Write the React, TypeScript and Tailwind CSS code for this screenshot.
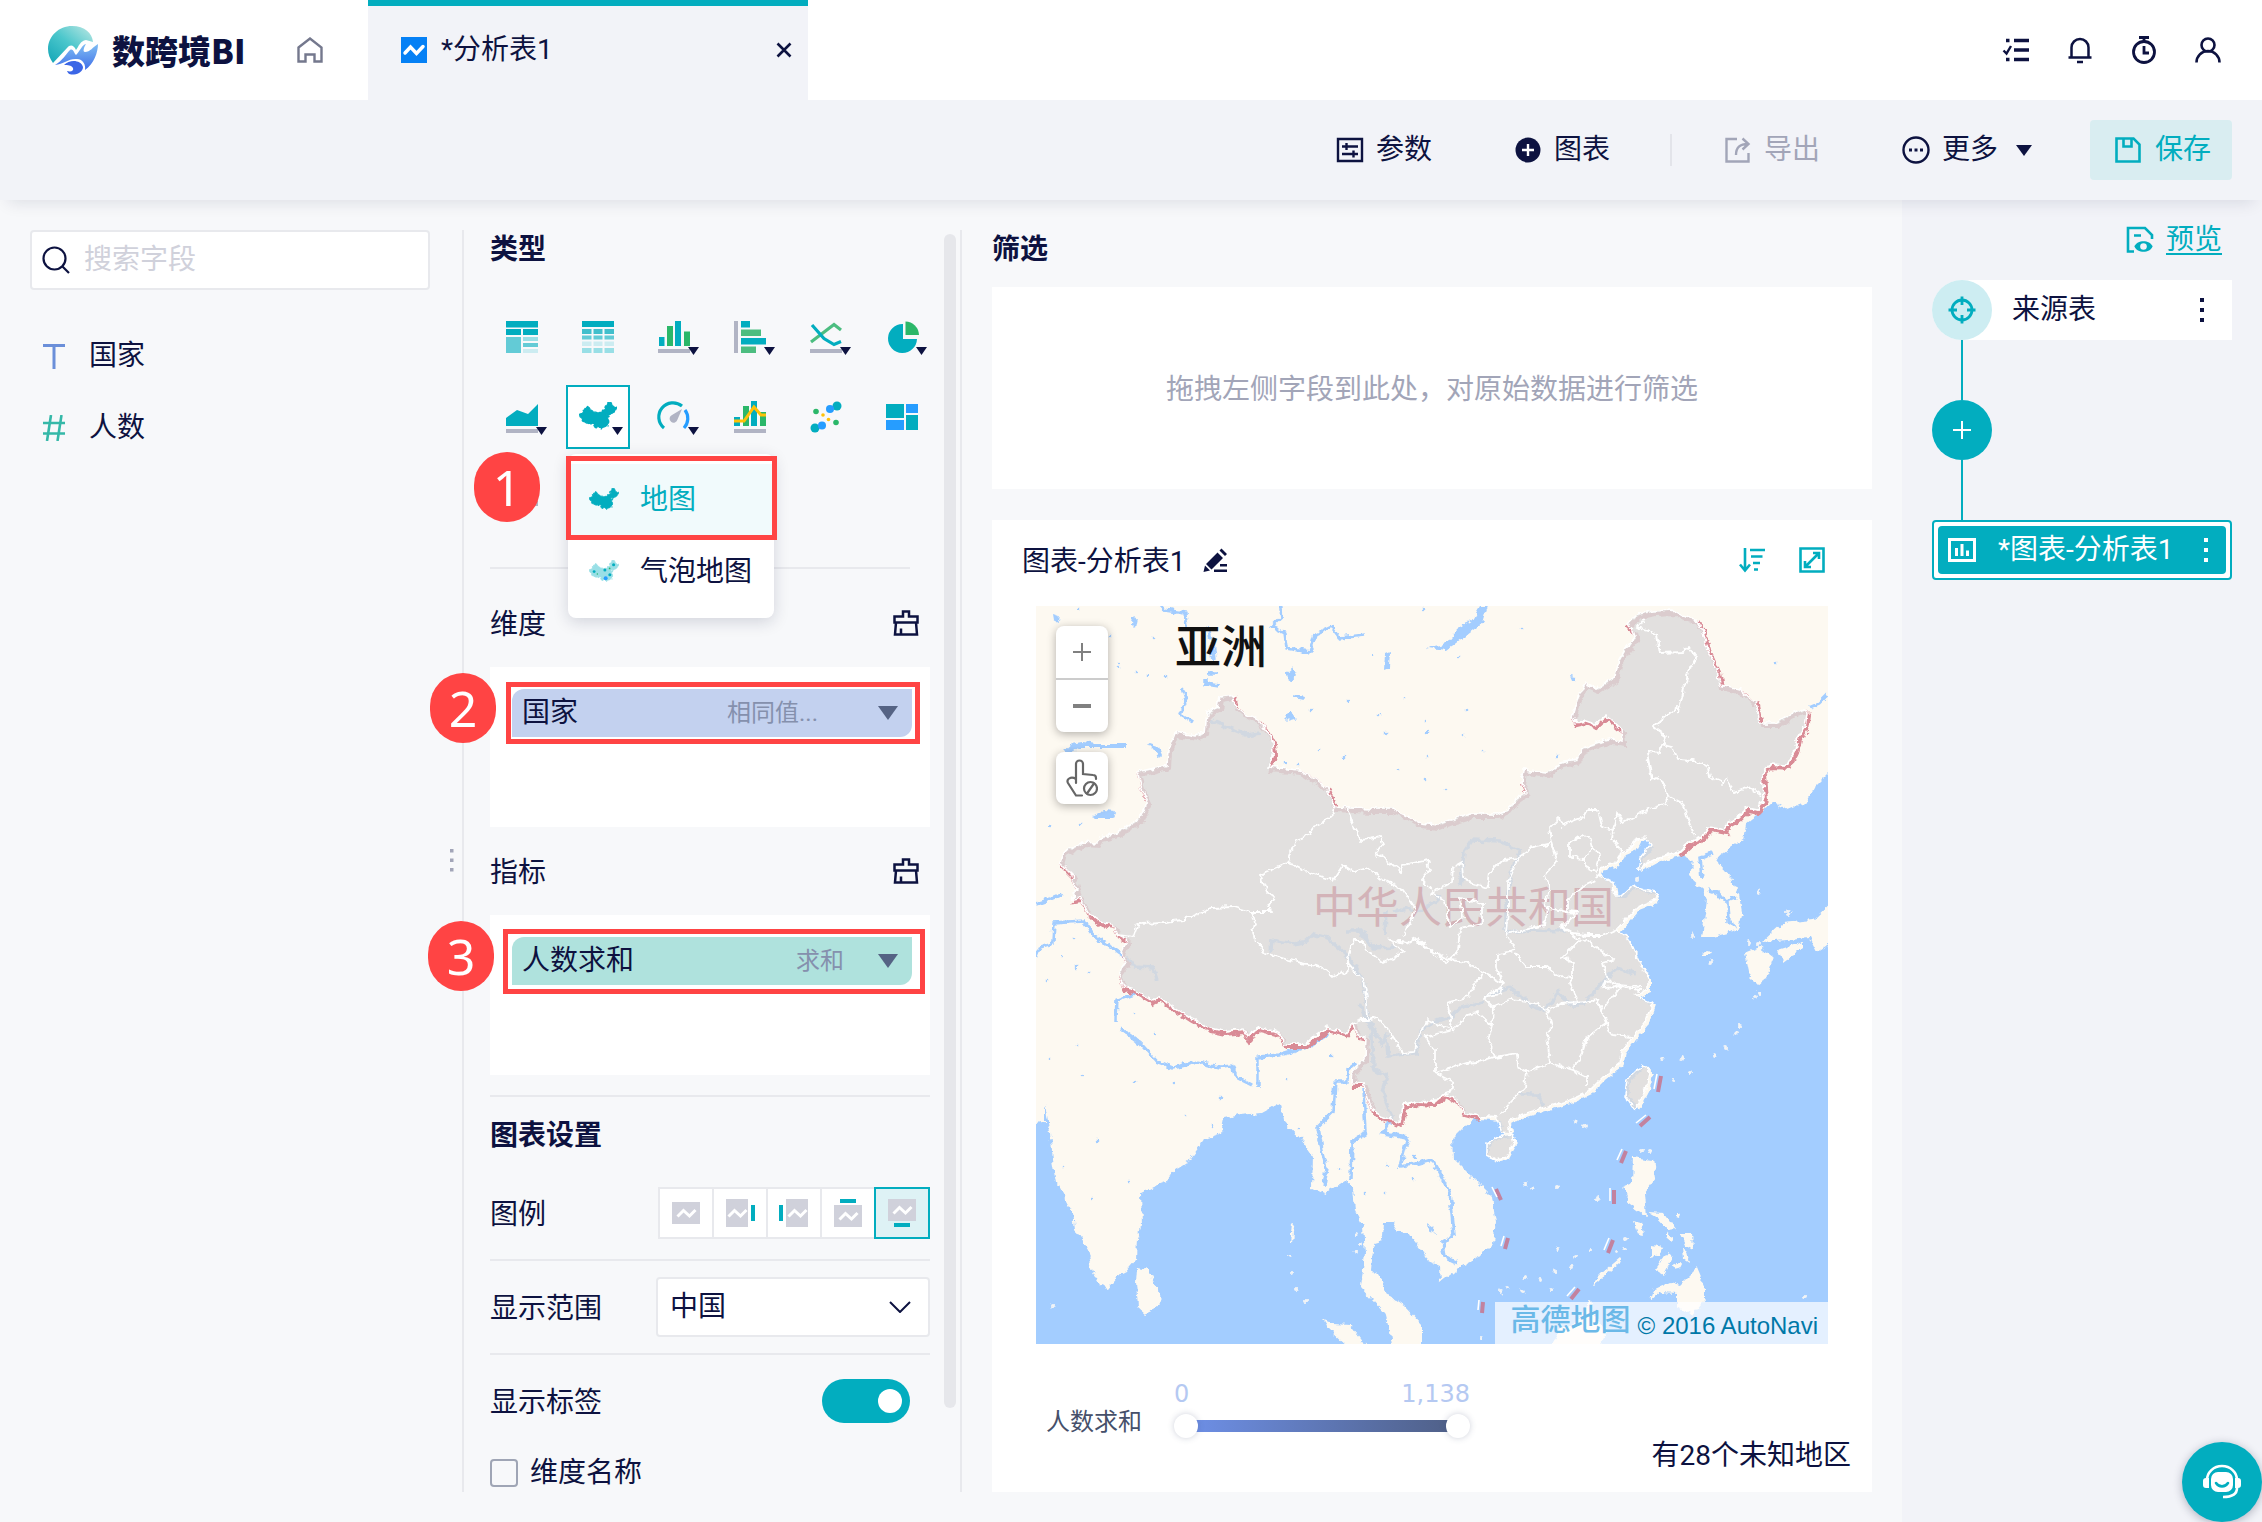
import { useState, type ReactNode } from 'react'
import clsx from 'clsx'

/* ---------- map geometry (792 x 738) ---------- */

const LAND_BORDER =
  '442,510 427,506 421,494 409,487 397,496 381,495 367,499 364,516 347,511 336,504 331,489 327,477 316,477 317,464 329,452 330,431 322,429 317,417 309,427 291,421 281,428 269,438 249,438 241,426 222,421 216,425 212,432 206,423 187,425 174,422 154,412 134,399 122,391 116,394 99,384 87,381 82,367 90,356 86,346 91,334 81,329 77,318 64,316 52,307 44,291 36,292 41,284 36,269 24,257 27,246 47,236 61,237 64,231 81,227 104,212 111,196 106,184 101,166 131,159 132,144 139,126 159,130 169,126 171,106 182,101 184,91 196,89 199,99 209,107 222,114 229,122 236,134 237,147 232,161 264,164 284,177 291,181 299,201 334,203 356,203 369,209 384,217 401,219 414,214 434,208 461,208 472,203 479,194 490,186 485,176 487,164 511,167 524,157 541,154 547,142 564,136 577,133 587,135 586,124 569,110 559,118 547,114 539,116 536,111 541,94 549,77 562,82 579,71 582,57 591,41 599,31 597,24 591,19 602,8 617,5 636,4 647,10 659,13 667,26 672,44 681,64 684,79 704,84 714,93 720,96 723,112 724,117 741,117 752,109 767,103 771,107 769,121 762,131 759,144 751,159 734,158 726,167 728,191 721,204 711,202 702,211 691,217 689,224 672,221 666,231 654,236 642,247'

const COAST =
  '642,247 624,251 602,263 604,252 614,239 609,231 601,232 596,242 586,246 579,257 564,262 562,269 577,277 579,289 586,289 596,280 608,284 621,287 619,294 601,301 592,311 581,323 592,332 597,343 601,352 612,371 612,384 599,389 616,397 609,417 596,432 587,444 584,457 567,471 552,486 534,494 507,502 484,509 472,516 474,527 466,526 461,512'

const CHINA = `M${LAND_BORDER} ${COAST}Z`
const TAIWAN = 'M606,459 613,464 611,481 599,504 589,489 591,474Z'
const HAINAN = 'M451,537 461,531 477,529 479,536 471,551 461,554 451,549Z'

const PROVINCES = [
  'M299,201 297,207 286,217 277,221 269,232 259,235 251,257 224,269 231,286 238,291 231,302 236,306 216,306 197,301 177,302 147,314 127,316 102,317 97,331 81,329',
  'M216,306 219,317 217,326 219,336 229,347 261,356 286,361 297,371 312,364 312,351 317,334 325,334 331,344 347,357 359,351 367,346 354,334 371,337 381,332 394,344 411,356 418,350 422,344',
  'M251,257 259,259 274,267 297,274 307,259 318,266 331,262 347,274 367,284 379,302 377,311 371,321 367,331',
  'M311,202 317,219 326,234 344,231 346,239 339,247 354,257 366,266 367,259 392,254 394,264 386,274 396,286 416,276 417,261 426,256 427,271 436,277 452,282 454,267 467,254 482,252 497,241 516,237 514,221 524,211 527,219 547,211 551,204 562,204 566,221 577,224 581,207 587,216 611,204 631,197 632,189 628,178 621,172 616,174 611,146 624,147 626,139 631,131 617,121 641,101 642,107 647,87 652,67 661,52 652,41 646,46 624,47 621,29 612,24 602,21 609,11',
  'M626,139 636,141 641,154 657,155 672,161 674,171 687,177 691,172 697,187 714,181 726,189',
  'M632,189 647,197 652,214 659,231',
  'M577,224 576,232 586,244',
  'M546,229 534,237 534,251 549,252 556,242 554,234Z',
  'M556,242 564,249 559,266 549,261 549,252',
  'M516,237 521,254 509,269 514,284 509,301 531,306 531,294 546,281 561,274',
  'M482,252 472,276 472,307 470,327 492,323 509,319 511,302',
  'M470,327 479,344 461,349 461,362 467,377',
  'M479,347 491,361 511,361 524,371 537,372 537,357 527,351 544,334 526,321 541,307 531,306',
  'M526,321 536,327 551,329 567,329 581,323',
  'M544,331 564,344 577,354 567,357 571,371 581,379 604,381',
  'M396,286 409,296 414,321 427,312 424,292 447,297 447,317 424,322 422,344 416,354 396,346 381,334',
  'M416,354 430,356 444,364 467,377 464,388 447,391',
  'M312,357 327,374 331,395 332,414 341,411 354,427 367,447 379,446 382,429 392,414 417,424 411,397 431,391 444,371 447,364',
  'M317,417 326,414 332,414',
  'M417,424 389,431 399,444 399,467 417,476 417,484 409,487',
  'M399,467 412,463 431,457 441,456 459,451 481,447 482,461 491,466',
  'M417,424 430,410 441,406 456,419 452,434 459,451',
  'M456,419 457,401 474,394 499,397 512,404 516,421 511,427 514,457 491,466',
  'M457,401 447,391 467,381',
  'M537,372 534,376 541,397 526,398 512,404',
  'M541,397 561,394 566,404 571,417 551,431 546,448 537,464 514,457',
  'M581,379 569,374 566,382 584,381 604,384',
  'M566,404 575,392 584,381',
  'M571,417 576,429 596,431',
  'M537,464 551,471 551,481',
  'M491,466 489,481 474,497 464,509',
]

const SEAS = [
  'M0,518 9,516 9,497 14,527 17,554 21,577 37,607 39,624 52,644 57,667 64,679 72,682 81,671 89,667 100,654 101,632 106,619 105,587 117,581 131,576 132,569 152,556 169,533 186,527 189,512 204,509 226,507 244,497 247,514 264,532 277,551 276,581 289,587 309,574 317,581 319,604 327,621 329,647 325,681 337,694 349,707 354,727 357,745 -10,745 -10,518Z',
  'M386,745 386,719 367,699 349,687 344,669 335,664 337,644 346,631 347,616 356,616 361,624 372,627 384,642 392,654 404,659 405,676 427,659 444,650 457,637 460,617 456,591 437,572 417,552 416,532 427,521 442,511 450,490 540,400 540,255 590,215 642,247 657,254 654,271 666,282 671,294 666,331 676,331 692,327 702,322 706,307 703,289 694,271 682,257 684,249 707,234 710,219 726,206 737,196 751,204 771,196 779,181 800,160 800,745Z',
]

const ISLANDS = [
  'M101,662 112,664 126,691 122,702 109,708 102,702 100,677Z',
  'M287,714 297,718 314,719 334,745 316,745 292,722Z',
  'M709,347 724,341 737,351 731,372 722,379 714,371Z',
  'M726,336 747,317 777,314 800,292 800,334 781,346 774,332 751,334Z',
  'M742,344 767,336 767,342 747,357Z',
  'M667,347 671,345 675,346 673,349 667,349Z',
  'M597,551 617,554 620,571 609,586 611,611 594,599 587,581 596,577Z',
  'M597,615 605,617 607,629 601,627Z',
  'M612,606 628,607 640,624 634,625 622,612Z',
  'M630,627 638,632 636,636 630,631Z',
  'M640,607 644,609 643,613 640,612Z',
  'M616,639 627,641 624,649 616,651Z',
  'M644,627 656,627 657,644 650,640Z',
  'M619,664 631,647 637,651 627,669Z',
  'M637,660 644,657 646,661 638,663Z',
  'M646,642 651,646 653,656 647,652Z',
  'M614,694 617,684 634,676 644,679 661,662 669,681 669,694 657,709 641,701 641,687 624,686Z',
  'M557,676 566,667 584,652 586,655 570,668 558,678Z',
  'M511,745 524,724 545,712 554,694 557,707 571,726 561,745Z',
  'M256,617 259,616 257,626 256,638 254,638Z',
]

const LAKES = [
  'M391,42 410,37 421,24 436,14 444,0 451,0 446,17 421,36 411,44Z',
  'M57,210 68,205 79,206 76,212 60,212Z',
  'M112,138 124,142 127,149 122,151Z',
  'M250,66 256,61 261,70 256,76 251,72Z',
  'M349,48 354,46 353,62 348,64Z',
  'M257,89 269,91 268,94 259,92Z',
  'M248,112 254,106 262,112 251,115Z',
  'M534,70 541,71 540,75 536,75Z',
  'M391,618 398,623 400,628 392,624Z',
  'M27,145 35,138 47,136 60,138 91,138 91,142 66,142 44,142 34,148Z',
  'M96,10 101,12 99,22 95,18Z',
  'M17,8 23,10 22,16 18,14Z',
]

const RIVERS = [
  'M121,-5 129,4 149,7 151,21 M171,68 183,68 M170,72 170,78 183,80',
  'M146,81 150,94 144,108 157,116',
  'M244,-5 246,11 236,21 249,27 251,42 274,46 279,29 296,21 304,32 329,29',
  'M172,20 176,36 178,54',
  'M0,298 14,293 26,288',
  'M0,351 4,341 17,337 18,317 47,315 57,329 91,352 98,361 117,362 121,375',
  'M101,387 81,394 80,414',
  'M84,422 104,437 121,456 136,462 161,456 184,461 196,460 202,472 216,479',
  'M222,481 222,451 244,449 274,440 292,427',
  'M319,457 311,464 311,476 299,476 297,506 282,521 286,544 291,562 288,581',
  'M328,484 330,527 316,536 315,574',
  'M323,398 336,425 337,462 351,470 346,486 356,511 347,527 372,531 364,560 379,558 396,553 414,587 418,629 407,636 409,651 421,657',
  'M235,345 236,334 258,338 271,335 278,328 291,332 312,350 327,374 333,414 346,438 350,428 352,450 380,447 384,425 400,415 414,412 424,402 448,396',
  'M310,325 326,325 337,342 360,341 M350,305 349,330',
  'M172,113 210,129 225,127',
  'M424,281 428,246 436,234 464,235 484,245 475,266 470,300 470,326 495,324 530,325',
  'M358,305 372,302 381,306 400,296 404,288',
  'M447,391 474,382 500,402 508,404 522,386 534,398 548,398 570,372 582,362 600,368',
  'M484,488 502,488 507,500',
  'M666,272 664,252 676,248 M672,284 682,287 690,296 700,292 M692,296 693,315 700,320',
  'M773,102 782,98 792,88',
]

// x,y pairs of ponds scattered over the land
const PONDS = [
  [30, 45], [75, 30], [118, 31], [84, 60], [101, 66], [112, 68], [129, 70], [44, 217], [14, 220], [42, 3],
  [267, 92], [275, 103], [312, 96], [342, 109], [388, 115], [391, 126], [368, 92], [428, 130], [350, 128], [362, 163],
  [389, 173], [409, 182], [284, 144], [309, 151], [262, 159], [249, 157], [338, 49], [424, 51], [387, 3], [486, 23],
  [37, 333], [25, 350], [41, 361], [54, 367], [11, 374], [15, 453], [47, 468], [99, 475], [138, 477], [149, 509],
  [97, 408], [118, 428], [41, 438], [62, 535], [26, 561], [93, 576], [56, 593], [185, 492], [176, 520], [251, 475],
  [295, 451], [262, 523], [264, 533], [329, 587], [349, 587], [377, 574], [351, 559], [378, 550], [304, 563], [740, 57],
  [521, 150], [448, 145], [391, 151], [431, 104],
]

const ISLETS = [
  [253, 649], [256, 668], [261, 683], [269, 695], [17, 699], [627, 453], [646, 452], [637, 474], [654, 466], [679, 449],
  [690, 442], [700, 427], [704, 420], [540, 517], [549, 520], [489, 578], [497, 582], [521, 581], [562, 592], [535, 661],
  [522, 642], [519, 666], [489, 671], [471, 681], [465, 685], [486, 685], [516, 684], [504, 674], [540, 650], [554, 645],
  [590, 632], [588, 643], [445, 733], [768, 690], [723, 387], [719, 391], [723, 338], [750, 305], [753, 307], [606, 545],
  [613, 546], [320, 628], [324, 640], [320, 646], [675, 356], [712, 336], [581, 645], [657, 329], [723, 286], [601, 273],
]

const DASHES = [
  [622, 486, 625, 470], [604, 520, 614, 511], [585, 557, 590, 545], [578, 598, 578, 584], [572, 647, 577, 634],
  [535, 693, 543, 683], [446, 707, 447, 696], [469, 643, 472, 632], [465, 594, 460, 583],
]

function MapCanvas() {
  return (
    <svg viewBox="0 0 792 738" className="block w-full bg-[#fdf9f1]" role="img" aria-label="中国地图">
      <defs>
        <filter id="coastline" x="0" y="0" width="100%" height="100%" filterUnits="userSpaceOnUse" colorInterpolationFilters="sRGB">
          <feTurbulence type="fractalNoise" baseFrequency="0.14" numOctaves="3" seed="7" />
          <feDisplacementMap in="SourceGraphic" scale="7" xChannelSelector="R" yChannelSelector="G" />
        </filter>
      </defs>
      <g filter="url(#coastline)">
        <rect x="-10" y="-10" width="820" height="770" fill="#fdf9f1" />
        {SEAS.map((d) => <path key={d} d={d} fill="#a3cdff" />)}
        {LAKES.map((d) => <path key={d} d={d} fill="#a3cdff" />)}
        {ISLANDS.map((d) => <path key={d} d={d} fill="#fdf9f1" />)}
        {ISLETS.map(([x, y]) => <circle key={`${x}-${y}`} cx={x} cy={y} r="2" fill="#f2f4f6" />)}
        {PONDS.map(([x, y]) => <circle key={`${x}-${y}`} cx={x} cy={y} r="1.3" fill="#a3cdff" />)}
        <path d={CHINA} fill="#fdf9f1" transform="translate(3 3)" />
        <path d={TAIWAN} fill="#fdf9f1" transform="translate(4 1)" />
        <path d={HAINAN} fill="#fdf9f1" transform="translate(2 2)" />
        <g fill="none" stroke="#a3cdff" strokeWidth="3.5">
          {RIVERS.map((d) => <path key={d} d={d} />)}
        </g>
        <path d={`M${LAND_BORDER}`} fill="none" stroke="#d98b96" strokeWidth="4" transform="translate(2 3)" />
        <g fill="#dcdbda" fillOpacity="0.82" stroke="#fff" strokeWidth="1.6">
          <path d={CHINA} />
          <path d={TAIWAN} />
          <path d={HAINAN} />
        </g>
      </g>
      <text x="277" y="317" fontSize="43" fill="#d3b3b8" className="font-['Noto_Sans_CJK_SC',sans-serif]">中华人民共和国</text>
      <g filter="url(#coastline)" fill="none" stroke="#fff" strokeWidth="1.8">
        {PROVINCES.map((d) => <path key={d} d={d} />)}
      </g>
      {DASHES.map(([x1, y1, x2, y2]) => (
        <g key={`${x1}-${y1}`} fill="none">
          <path d={`M${x1},${y1} ${x2},${y2}`} stroke="#c2829f" strokeWidth="4" />
          <path d={`M${x1 - 4},${y1 - 3} ${x2 - 4},${y2 - 2}`} stroke="#fff" strokeWidth="1.6" />
        </g>
      ))}
      <text x="139" y="57" fontSize="46" fill="#111" className="font-['Noto_Sans_CJK_SC',sans-serif] font-medium">亚洲</text>
    </svg>
  )
}

/* ---------- icons ---------- */

type IconProps = { className?: string }

function ChinaIcon({ className, bubbles }: IconProps & { bubbles?: boolean }) {
  return (
    <svg viewBox="20 0 756 600" className={className} fill={bubbles ? '#99dfe6' : '#02adbf'}>
      <path d={CHINA} stroke={bubbles ? '#99dfe6' : '#02adbf'} strokeWidth="24" strokeLinejoin="round" />
      <path d={TAIWAN} />
      <path d={HAINAN} />
      {bubbles && (
        <>
          <circle cx="150" cy="290" r="36" fill="#02adbf" />
          <circle cx="420" cy="250" r="38" fill="#02adbf" />
          <circle cx="640" cy="120" r="38" fill="#02adbf" />
          <circle cx="545" cy="370" r="38" fill="#02adbf" />
          <circle cx="440" cy="455" r="50" fill="#269dff" />
          <circle cx="230" cy="350" r="18" fill="#2bb769" />
          <circle cx="540" cy="210" r="22" fill="#2bb769" />
        </>
      )}
    </svg>
  )
}

function BrandMark() {
  return (
    <svg viewBox="0 0 50 50" className="size-[50px]">
      <defs>
        <linearGradient id="globe" x1="1" y1="0" x2="0" y2="1">
          <stop offset="0" stopColor="#bfe8e4" />
          <stop offset="0.5" stopColor="#4cc7cc" />
          <stop offset="1" stopColor="#12a5b6" />
        </linearGradient>
        <linearGradient id="wave" x1="0" y1="0" x2="0" y2="1">
          <stop offset="0" stopColor="#7fbdf3" />
          <stop offset="1" stopColor="#3f6fe8" />
        </linearGradient>
      </defs>
      <path d="M24 1C37 1 44 8 45 17L38 15C32 16 31 21 28 25C26 20 22 19 19 23L5 38C2 34 0 29 0 24C0 11 11 1 24 1Z" fill="url(#globe)" />
      <path d="M7 40C14 36 19 28 22 25C25 23 26 28 28 30C32 26 34 20 38 19C35 24 35 27 37 27C42 27 45 22 50 19C50 27 46 39 37 45C38 40 35 34 29 34C21 33 16 39 7 40Z" fill="url(#wave)" />
      <path d="M16 40C22 34 33 35 35 42C35 46 31 49 26 49.500C21 50 20 48 19 46C23 47 26 46 25 43C23 40 20 40 16 40Z" fill="#3b66e6" />
    </svg>
  )
}

function BrushIcon({ className }: IconProps) {
  return (
    <svg viewBox="0 0 26 26" className={className} fill="none" stroke="currentColor" strokeWidth="2.500">
      <path d="M10 6.500V1.500H16V6.500H24.500V12.500H1.500V6.500ZM3 12.500 2 24.500H24L23 12.500M8 24V18.500" />
    </svg>
  )
}

const TEAL = '#02adbf'
const GREEN = '#2bb769'

const chartTypes: { name: string; more?: boolean; art: ReactNode }[] = [
  {
    name: '分组表',
    art: (
      <>
        <path fill={TEAL} d="M0 0h32v6.500H0zM0 8h15v6H0zM17 8h15v6H17z" />
        <path fill="#63cbd6" d="M0 16h15v16H0zM17 22h15v4H17z" />
        <path fill="#99dfe6" d="M17 16h15v4H17z" />
        <path fill="#ccecf1" d="M17 28h15v4H17z" />
      </>
    ),
  },
  {
    name: '明细表',
    art: (
      <>
        <path fill={TEAL} d="M0 0h32v6H0z" />
        <path fill="#42bfcc" d="M0 8h9.500v5H0zM11.500 8h9v5h-9zM22.500 8h9.500v5h-9.500z" />
        <path fill="#63cbd6" d="M0 14.500h9.500v4H0zM11.500 14.500h9v4h-9zM22.500 14.500h9.500v4h-9.500z" />
        <path fill="#ccecf1" d="M0 20.500h9.500v4.500H0zM11.500 20.500h9v4.500h-9zM22.500 20.500h9.500v4.500h-9.500z" />
        <path fill="#99dfe6" d="M0 27h9.500v5H0zM11.500 27h9v5h-9zM22.500 27h9.500v5h-9.500z" />
      </>
    ),
  },
  {
    name: '柱状图',
    more: true,
    art: (
      <>
        <path fill={TEAL} d="M1 16h5.500v9H1zM17 0h6v25h-6z" />
        <path fill={GREEN} d="M9 5h6v20H9zM26 10.500h6V25h-6z" />
        <path fill="#b1b4c4" d="M0 28h32v4H0z" />
      </>
    ),
  },
  {
    name: '条形图',
    more: true,
    art: (
      <>
        <path fill="#b1b4c4" d="M0 0h4v32H0z" />
        <path fill={TEAL} d="M7 0h9v6.500H7zM7 17h25v6.500H7z" />
        <path fill="#4cbd80" d="M7 8.500h20V15H7zM7 25.500h15V32H7z" />
      </>
    ),
  },
  {
    name: '折线图',
    more: true,
    art: (
      <>
        <path fill="none" stroke="#4cbd80" strokeWidth="3.200" d="M1 21 24 3.500 31 9" />
        <path fill="none" stroke={TEAL} strokeWidth="3.200" d="M2 4 14 17.500 24 23.500 31 20.500" />
        <path fill="#b1b4c4" d="M0 28h32v4H0z" />
      </>
    ),
  },
  {
    name: '饼图',
    more: true,
    art: (
      <>
        <path fill={TEAL} d="M17 3v15h14A14.500 14.500 0 1 1 17 3z" />
        <path fill={GREEN} d="M19.500 0.500A14 14 0 0 1 33 14H19.500z" />
      </>
    ),
  },
  {
    name: '面积图',
    more: true,
    art: (
      <>
        <path fill={TEAL} d="M0 14 11 6 22 10 32 0V22H0z" transform="translate(0 3)" />
        <path fill="#b1b4c4" d="M0 28h32v4H0z" />
      </>
    ),
  },
  { name: '地图', more: true, art: null },
  {
    name: '仪表盘',
    more: true,
    art: (
      <>
        <path fill="none" stroke={TEAL} strokeWidth="3.200" d="M6 27A14 14 0 0 1 24 5" />
        <path fill="none" stroke="#269dff" strokeWidth="3.200" d="M27 9A14 14 0 0 1 26 27" />
        <path fill="#b1b4c4" d="M24 8 19.500 18.500A4 4 0 1 1 14 14z" />
      </>
    ),
  },
  {
    name: '组合图',
    art: (
      <>
        <path fill={TEAL} d="M0 16h6v9H0zM17 0h6v25h-6z" />
        <path fill={GREEN} d="M9 5h6v20H9zM26 11h6v14h-6z" />
        <path fill="none" stroke="#ffc107" strokeWidth="3" d="M0 20H10L20 6 27 14H32" />
        <path fill="#b1b4c4" d="M0 28h32v4H0z" />
      </>
    ),
  },
  {
    name: '散点图',
    art: (
      <>
        <circle cx="27" cy="5" r="4.500" fill={TEAL} />
        <circle cx="20" cy="8" r="4" fill="#269dff" />
        <circle cx="5" cy="27" r="4.500" fill={TEAL} />
        <circle cx="12" cy="24.500" r="4" fill="#269dff" />
        <circle cx="6" cy="10.500" r="2.800" fill={GREEN} />
        <circle cx="26" cy="21.500" r="2.800" fill={GREEN} />
        <circle cx="13" cy="14" r="1.800" fill="#ffc107" />
        <circle cx="18.500" cy="18.500" r="1.800" fill="#ffc107" />
      </>
    ),
  },
  {
    name: '矩形树图',
    art: (
      <>
        <path fill={TEAL} d="M0 3h18v14H0zM20 14h12v15H20z" />
        <path fill="#269dff" d="M20 3h12v9H20zM0 19h18v10H0z" />
      </>
    ),
  },
  {
    name: '词云',
    art: (
      <>
        <path fill={GREEN} d="M0 4h20v8H0z" />
        <path fill={TEAL} d="M0 14h22v8H0z" />
        <path fill="#b1b4c4" d="M24 20h8v5h-8z" />
      </>
    ),
  },
]

function Step({ n, className }: { n: number; className: string }) {
  return (
    <span className={clsx("absolute z-20 flex h-[70px] w-[66px] items-center justify-center rounded-full bg-[#ff4444] font-['Noto_Sans',sans-serif] text-[50px] leading-none text-white", className)}>
      {n}
    </span>
  )
}

function ToolButton({ label, muted, children }: { label: string; muted?: boolean; children: ReactNode }) {
  return (
    <button className={clsx('flex items-center gap-3', muted && 'text-[#a2a5b8]')}>
      <svg viewBox="0 0 28 28" className="size-7" fill="none" stroke="currentColor" strokeWidth="2.400">{children}</svg>
      {label}
    </button>
  )
}

function Dots({ className }: IconProps) {
  return (
    <svg viewBox="0 0 4 24" className={clsx('h-6 w-1', className)} fill="currentColor">
      <path d="M0 0h4v4H0zM0 10h4v4H0zM0 20h4v4H0z" />
    </svg>
  )
}

function FieldZone({ title, field, agg, chip, step, frame, badge }: {
  title: string; field: string; agg: ReactNode; chip: string; step: number; frame: string; badge: string
}) {
  return (
    <section>
      <div className="flex h-10 items-center justify-between pr-[11px]">
        <h3>{title}</h3>
        <button aria-label={`清空${title}`}><BrushIcon className="mb-1 size-[26px]" /></button>
      </div>
      <div className="mt-[22px] h-[160px] bg-white px-[22px] pt-[22px] pr-[18px]">
        <div className="relative">
          <div className={clsx('flex h-12 items-center rounded-tl-xl rounded-br-xl pr-[14px] pl-[10px]', chip)}>
            <span className="flex-1">{field}</span>
            <span className="flex w-[117px] text-2xl leading-8 text-[#8590ad]">{agg}</span>
            <button aria-label={`${field}选项`} className="ml-[34px]">
              <svg viewBox="0 0 20 14" className="h-[14px] w-5 fill-[#556384]"><path d="M0 0h20L10 14z" /></svg>
            </button>
          </div>
          <div className={clsx('pointer-events-none absolute border-[5px] border-[#ff4444]', frame)} />
          <Step n={step} className={badge} />
        </div>
      </div>
    </section>
  )
}

const legendPositions = [
  { id: 'none', label: '无', box: [3, 7, 28, 22], bar: null },
  { id: 'right', label: '右', box: [3, 4, 22, 28], bar: [28, 10, 4, 16] },
  { id: 'left', label: '左', box: [9, 4, 22, 28], bar: [2, 10, 4, 16] },
  { id: 'top', label: '上', box: [3, 10, 28, 22], bar: [9, 4, 16, 4] },
  { id: 'bottom', label: '下', box: [3, 4, 28, 22], bar: [9, 28, 16, 4] },
]

function LegendPicker() {
  const [pos, setPos] = useState('bottom')
  return (
    <div role="radiogroup" aria-label="图例" className="flex h-[52px]">
      {legendPositions.map(({ id, label, box: [x, y, w, h], bar }) => {
        const cx = x + w / 2
        const cy = y + h / 2
        return (
          <label
            key={id}
            className={clsx(
              'relative -ml-0.5 flex w-14 items-center justify-center border-2',
              pos === id ? 'z-10 border-[#02adbf] bg-[#def2f5]' : 'border-[#e8e9ed] bg-white'
            )}
          >
            <input type="radio" name="legend" aria-label={label} checked={pos === id} onChange={() => setPos(id)} className="sr-only" />
            <svg viewBox="0 0 34 36" className="h-9 w-[34px]">
              <rect x={x} y={y} width={w} height={h} fill="#d0d1db" />
              <path d={`M${cx - 8.5} ${cy + 3.5} l6 -6 l6 5.500 l6 -6`} fill="none" stroke="#fff" strokeWidth="3" />
              {bar && <rect x={bar[0]} y={bar[1]} width={bar[2]} height={bar[3]} fill="#02adbf" />}
            </svg>
          </label>
        )
      })}
    </div>
  )
}

const thumb =
  'pointer-events-none col-start-1 row-start-1 h-6 w-full appearance-none bg-transparent [&::-webkit-slider-thumb]:pointer-events-auto [&::-webkit-slider-thumb]:size-6 [&::-webkit-slider-thumb]:appearance-none [&::-webkit-slider-thumb]:rounded-full [&::-webkit-slider-thumb]:bg-white [&::-webkit-slider-thumb]:shadow-[0_0_6px_rgba(60,70,110,0.25)]'

export default function App() {
  const [range, setRange] = useState([0, 1138])
  const [showLabel, setShowLabel] = useState(true)
  const [dimName, setDimName] = useState(false)

  return (
    <div className="flex min-h-screen flex-col bg-[#f7f8fa] font-['Roboto','Noto_Sans_CJK_SC',sans-serif] text-[28px] leading-10 text-[#0d1240]">
      {/* Window tabs */}
      <header className="flex h-[100px] bg-white">
        <div className="flex w-[368px] items-center pl-12">
          <BrandMark />
          <span className="ml-[14px] font-['Noto_Sans_CJK_SC',sans-serif] text-[33px] font-black">数跨境BI</span>
          <a href="#" aria-label="首页" className="ml-[51px]">
            <svg viewBox="0 0 26 26" className="size-[26px]" fill="none" stroke="#74788d" strokeWidth="2.400">
              <path d="M1.500 10.500 13 1.500 24.500 10.500V24.500H17.500V17.500H8.500V24.500H1.500Z" />
            </svg>
          </a>
        </div>
        <div className="flex w-[440px] items-center border-t-[6px] border-[#02adbf] bg-[#f2f3f8] pr-4 pb-[6px] pl-[33px]">
          <svg viewBox="0 0 26 26" className="size-[26px]">
            <path fill="#0580f5" d="M0 0h26v26H0z" />
            <path d="M4 16 9.500 10 15.500 16.500 22 9.500" fill="none" stroke="#fff" strokeWidth="3.500" strokeLinecap="round" />
          </svg>
          <span className="ml-[14px] flex-1">*分析表1</span>
          <button aria-label="关闭">
            <svg viewBox="0 0 16 16" className="size-4" fill="none" stroke="currentColor" strokeWidth="2.600"><path d="M1.500 1.500 14.500 14.500M14.500 1.500 1.500 14.500" /></svg>
          </button>
        </div>
        <nav className="flex flex-1 items-center justify-end gap-9 pr-10">
          <button aria-label="任务">
            <svg viewBox="0 0 28 28" className="size-7" fill="none" stroke="currentColor" strokeWidth="3.400">
              <path d="M12 4.500H27M12 14H27M12 23.500H27" />
              <path d="M4 4.500H7.500M4 23.500H7.500" />
              <path d="M1.500 14.500 4.500 17.500 9 10" strokeWidth="2.400" />
            </svg>
          </button>
          <button aria-label="通知">
            <svg viewBox="0 0 28 28" className="size-7" fill="none" stroke="currentColor" strokeWidth="2.500">
              <path d="M5.500 21V11.500A8.500 8.500 0 0 1 22.500 11.500V21M2.500 21.500H25.500M11 26H17" />
            </svg>
          </button>
          <button aria-label="定时">
            <svg viewBox="0 0 28 28" className="size-7" fill="none" stroke="currentColor" strokeWidth="2.800">
              <circle cx="14" cy="16" r="10.500" />
              <path d="M9 1.500H19M14 2V6M14 10V17H19" />
            </svg>
          </button>
          <button aria-label="账号">
            <svg viewBox="0 0 28 28" className="size-7" fill="none" stroke="currentColor" strokeWidth="2.600">
              <circle cx="14" cy="9" r="6.500" />
              <path d="M2.500 26.500A11.500 11.500 0 0 1 25.500 26.500" />
            </svg>
          </button>
        </nav>
      </header>

      {/* Toolbar */}
      <div className="relative z-30 flex h-[100px] items-center justify-end bg-[#f2f3f8] pr-[30px] shadow-[0_10px_16px_-8px_rgba(20,25,60,0.12)]">
        <div className="flex items-center gap-[82px]">
          <ToolButton label="参数">
            <path d="M2 3H26V25H2ZM6 10.500H22M6 18H22M10.500 7V14M17.500 14.500V21.500" />
          </ToolButton>
          <ToolButton label="图表">
            <circle cx="14" cy="14" r="12.500" fill="currentColor" stroke="none" />
            <path d="M14 8V20M8 14H20" stroke="#fff" />
          </ToolButton>
        </div>
        <span className="mr-[52px] ml-[60px] h-8 w-0.5 bg-[#e3e4ea]" />
        <ToolButton label="导出" muted>
          <path d="M13 3H2.500V25.500H24.500V17M12 19C12 11 16 8 24 8M18.500 2.500 24.500 8 18.500 13.500" />
        </ToolButton>
        <div className="ml-[82px] flex items-center gap-[18px]">
          <ToolButton label="更多">
            <circle cx="14" cy="14" r="12.500" />
            <path d="M7 14H10M12.500 14H15.500M18 14H21" strokeWidth="3" />
          </ToolButton>
          <svg viewBox="0 0 16 11" className="h-[11px] w-4" fill="currentColor"><path d="M0 0H16L8 11Z" /></svg>
        </div>
        <button className="ml-[58px] flex h-[60px] w-[142px] items-center justify-center gap-[14px] rounded-sm bg-[#d9edf1] pl-1 text-[#02adbf]">
          <svg viewBox="0 0 26 26" className="size-[26px]" fill="none" stroke="currentColor" strokeWidth="2.600">
            <path d="M1.500 1.500H18.500L24.500 7.500V24.500H1.500ZM8.500 2V9.500H16.500V2" />
          </svg>
          保存
        </button>
      </div>

      <div className="flex flex-1">
        <div className="flex min-w-0 flex-1 py-[30px]">
          {/* Fields */}
          <aside className="flex w-[464px] shrink-0 items-stretch border-r-2 border-[#e8e9ed] pl-[30px]">
            <div className="w-[400px]">
              <label className="flex h-[60px] items-center gap-[14px] rounded-sm border-2 border-[#e8e9ed] bg-white px-[10px]">
                <svg viewBox="0 0 28 28" className="size-7 shrink-0" fill="none" stroke="currentColor" strokeWidth="2.200">
                  <circle cx="12.500" cy="12.500" r="11" />
                  <path d="M20 20 27 27" />
                </svg>
                <input type="text" aria-label="搜索字段" placeholder="搜索字段" className="min-w-0 flex-1 outline-none placeholder:text-[#d0d1db]" />
              </label>
              <ul className="mt-[30px] pl-[13px]">
                <li className="flex h-[72px] items-center gap-6">
                  <svg viewBox="0 0 22 26" className="h-[26px] w-[22px]" fill="none" stroke="#6b8fd9" strokeWidth="3"><path d="M0 2.500H22M11 2.500V26" /></svg>
                  国家
                </li>
                <li className="flex h-[72px] items-center gap-6">
                  <svg viewBox="0 0 22 26" className="h-[26px] w-[22px]" fill="none" stroke="#35b8a8" strokeWidth="2.600"><path d="M0 8H22M0 18.500H22M8 0 4 26M18.500 0 14.500 26" /></svg>
                  人数
                </li>
              </ul>
            </div>
            <svg viewBox="0 0 4 24" className="ml-5 h-6 w-1 self-center fill-[#a2a5b8]"><path d="M0 0h3.500v3.500H0zM0 9.500h3.500v3.500H0zM0 19h3.500v3.500H0z" /></svg>
          </aside>

          {/* Chart configuration */}
          <section className="flex w-[498px] shrink-0 border-r-2 border-[#e8e9ed] pl-[26px]">
            <div className="w-[440px]">
              <h2 className="font-bold">类型</h2>
              <div className="relative mt-[35px]">
                <div className="grid grid-cols-[repeat(6,64px)] gap-x-3 gap-y-4">
                  {chartTypes.map((t) => (
                    <button
                      key={t.name}
                      aria-label={t.name}
                      className={clsx('relative flex size-16 items-center justify-center', t.name === '地图' && 'border-2 border-[#02adbf] bg-white')}
                    >
                      {t.art ? (
                        <svg viewBox="0 0 32 32" className="size-8 overflow-visible">{t.art}</svg>
                      ) : (
                        <ChinaIcon className="h-[30px] w-[38px]" />
                      )}
                      {t.more && (
                        <svg viewBox="0 0 11 8" className={clsx('absolute h-2 w-[11px]', t.name === '地图' ? 'right-[5px] bottom-3' : 'right-[7px] bottom-[14px]')} fill="currentColor">
                          <path d="M0 0H11L5.500 8Z" />
                        </svg>
                      )}
                    </button>
                  ))}
                </div>
                <div className="absolute top-[149px] left-[78px] z-10 w-[206px] rounded-lg bg-white py-[10px] shadow-[0_4px_16px_rgba(20,25,60,0.16)]">
                  <button className="flex h-[72px] w-full items-center gap-[21px] bg-[#f1fafc] pl-[21px] text-[#02adbf]">
                    <ChinaIcon className="h-6 w-[30px]" />
                    地图
                  </button>
                  <button className="flex h-[72px] w-full items-center gap-[21px] pl-[21px]">
                    <ChinaIcon bubbles className="h-6 w-[30px]" />
                    气泡地图
                  </button>
                  <div className="pointer-events-none absolute top-0.5 -right-[3px] -left-0.5 h-[84px] border-[5px] border-[#ff4444]" />
                </div>
                <Step n={1} className="top-[147px] -left-4" />
              </div>
              <div className="mt-[38px] mr-5 h-0.5 bg-[#e8e9ed]" />
              <div className="mt-9 flex flex-col gap-[26px]">
                <FieldZone title="维度" field="国家" agg="相同值..." chip="bg-[#c3d1ef]" step={2} frame="-top-[7px] -right-2 -bottom-[7px] -left-1.5" badge="-top-4 -left-[82px]" />
                <FieldZone title="指标" field="人数求和" agg={<span className="ml-auto">求和</span>} chip="bg-[#afe2dd]" step={3} frame="-top-2 -right-[13px] -bottom-[9px] -left-[9px]" badge="-top-4 -left-[84px]" />
              </div>
              <div className="mt-5 h-0.5 bg-[#e8e9ed]" />

              <h2 className="mt-[19px] font-bold">图表设置</h2>
              <div className="mt-[31px] flex items-center justify-between">
                <span className="pt-[3px]">图例</span>
                <LegendPicker />
              </div>
              <div className="my-4 mt-5 h-0.5 bg-[#e8e9ed]" />
              <div className="flex items-center justify-between">
                <label htmlFor="scope" className="pt-[3px]">显示范围</label>
                <div className="relative w-[274px]">
                  <select id="scope" className="block h-[60px] w-full appearance-none rounded-sm border-2 border-[#e8e9ed] bg-white px-3 outline-none">
                    <option>中国</option>
                    <option>世界</option>
                  </select>
                  <svg viewBox="0 0 22 12" className="pointer-events-none absolute top-6 right-[19px] h-3 w-[22px]" fill="none" stroke="currentColor" strokeWidth="2"><path d="M1 1 11 11 21 1" /></svg>
                </div>
              </div>
              <div className="mt-4 h-0.5 bg-[#e8e9ed]" />
              <div className="mt-6 flex items-center justify-between pr-5">
                <label htmlFor="show-label" className="pt-[3px]">显示标签</label>
                <input
                  id="show-label"
                  type="checkbox"
                  role="switch"
                  checked={showLabel}
                  onChange={(e) => setShowLabel(e.target.checked)}
                  className="flex h-11 w-[88px] appearance-none items-center rounded-full bg-[#c4c7d4] px-2 before:size-6 before:rounded-full before:bg-white checked:justify-end checked:bg-[#02adbf]"
                />
              </div>
              <label className="mt-9 flex h-7 items-center gap-3">
                <input
                  type="checkbox"
                  checked={dimName}
                  onChange={(e) => setDimName(e.target.checked)}
                  className="size-7 appearance-none rounded-sm border-2 border-[#9fa5b5] checked:bg-[#02adbf]"
                />
                维度名称
              </label>
            </div>
            <div className="mt-1 ml-[14px] h-[93%] w-3 rounded-full bg-[#e6e7eb]" />
          </section>

          {/* Filter and chart */}
          <main className="flex min-w-0 flex-1 flex-col px-[30px]">
            <h2 className="font-bold">筛选</h2>
            <div className="mt-[17px] flex h-[202px] items-center justify-center bg-white pt-1 text-[#a2a5b8]">
              拖拽左侧字段到此处，对原始数据进行筛选
            </div>
            <section className="mt-[31px] flex-1 bg-white px-11 pt-[22px]">
              <div className="-mx-[14px] flex h-10 items-center">
                <h3>图表-分析表1</h3>
                <button aria-label="重命名" className="mb-1 ml-[18px]">
                  <svg viewBox="0 0 24 24" className="size-6" fill="currentColor">
                    <path d="M3 16 14.500 4.500 20 10 8.500 21.500ZM16.500 2.500 18.500 0.500 24 6 22 8ZM0.500 24 2 17.500 7 22.500ZM11 21.500H24V24H11ZM17 16H24V18.500H17Z" />
                  </svg>
                </button>
                <div className="mr-[17px] mb-1 ml-auto flex items-center gap-[34px] text-[#02adbf]">
                  <button aria-label="排序">
                    <svg viewBox="0 0 26 26" className="size-[26px]" fill="none" stroke="currentColor" strokeWidth="2.600">
                      <path d="M6 1V22M1 17.500 6 23.500 11 17.500M11 3H26M12 9.500H23.500M14 16H21M15 22.500H19" />
                    </svg>
                  </button>
                  <button aria-label="全屏">
                    <svg viewBox="0 0 26 26" className="size-[26px]" fill="none" stroke="currentColor" strokeWidth="2.600">
                      <path d="M1.500 1.500H24.500V24.500H1.500ZM14 6H20V12M20 6 6 20M6 14V20H12" />
                    </svg>
                  </button>
                </div>
              </div>

              <div className="relative mt-6">
                <MapCanvas />
                <div className="absolute top-5 left-5 flex w-[52px] flex-col rounded-lg bg-white text-[#808080] shadow-[0_2px_10px_rgba(0,0,0,0.3)]">
                  <button aria-label="放大" className="flex h-[52px] items-center justify-center">
                    <svg viewBox="0 0 18 18" className="size-[18px]" stroke="currentColor" strokeWidth="2"><path d="M9 0V18M0 9H18" /></svg>
                  </button>
                  <button aria-label="缩小" className="flex h-[54px] items-center justify-center border-t-2 border-[#cccccc]">
                    <svg viewBox="0 0 18 4" className="h-1 w-[18px]" fill="currentColor"><path d="M0 0h18v4H0z" /></svg>
                  </button>
                </div>
                <button aria-label="禁止拖动" className="absolute top-[146px] left-5 flex size-[52px] items-center justify-center rounded-lg bg-white text-[#666666] shadow-[0_2px_10px_rgba(0,0,0,0.3)]">
                  <svg viewBox="0 0 32 38" className="h-[38px] w-8" fill="none" stroke="currentColor" strokeWidth="2.200" strokeLinecap="round">
                    <path d="M10 24V5A3.500 3.500 0 0 1 17 5V15L27 16A3 3 0 0 1 30 19V20M10 20C5 17 0 20 2 24L10 36.500H16" />
                    <circle cx="24.500" cy="29.500" r="6.500" />
                    <path d="M28 24.500 21 34.500" />
                  </svg>
                </button>
                <div className="absolute right-0 bottom-0 flex h-[42px] items-center bg-white/70 pr-[10px] pl-4 text-2xl">
                  <span className="-mt-3 font-['Noto_Sans_CJK_SC',sans-serif] text-[30px] font-medium text-[#6bb9e8]">高德地图</span>
                  <a href="#" className="ml-[7px] pt-1.5 font-['Liberation_Sans',sans-serif] text-[#0078a8]">© 2016 AutoNavi</a>
                </div>
              </div>

              <div className="mt-[34px] flex items-end pl-[10px]">
                <span className="text-2xl leading-8 text-[#46506a]">人数求和</span>
                <div className="ml-8 w-[296px]">
                  <div className="flex justify-between font-['DejaVu_Sans',sans-serif] text-2xl leading-8 text-[#b5c9f2]">
                    <span>{range[0].toLocaleString('en-US')}</span>
                    <span>{range[1].toLocaleString('en-US')}</span>
                  </div>
                  <div className="mt-1 grid items-center">
                    <div className="col-start-1 row-start-1 mx-3 h-3 bg-linear-to-r from-[#6e90e8] to-[#4f5f86]" />
                    <input type="range" aria-label="最小值" min={0} max={1138} value={range[0]} onChange={(e) => setRange([+e.target.value, range[1]])} className={thumb} />
                    <input type="range" aria-label="最大值" min={0} max={1138} value={range[1]} onChange={(e) => setRange([range[0], +e.target.value])} className={thumb} />
                  </div>
                </div>
              </div>
              <p className="-mt-0.5 -mr-[23px] pb-3 text-right">有28个未知地区</p>
            </section>
          </main>
        </div>

        {/* Node flow */}
        <aside className="w-[360px] shrink-0 bg-[#f2f3f8] px-[30px] pt-5">
          <div className="flex justify-end pr-[10px] text-[#02adbf]">
            <a href="#" className="flex items-center gap-3">
              <svg viewBox="0 0 28 28" className="size-7" fill="none" stroke="currentColor" strokeWidth="2.600">
                <path d="M8 25.500H2V2H19L26 9V13M8 9.500H15" />
                <path d="M8.500 20.500C11 13.500 24 13.500 26.500 20.500C24 27.500 11 27.500 8.500 20.500Z" fill="currentColor" stroke="none" />
                <circle cx="17.500" cy="20.500" r="3.300" fill="#f2f3f8" stroke="none" />
              </svg>
              <span className="underline underline-offset-4">预览</span>
            </a>
          </div>
          <div className="mt-5 flex h-[60px] items-center rounded-l-full rounded-r-sm bg-white pr-7">
            <span className="flex size-[60px] items-center justify-center rounded-full bg-[#cdedf2] text-[#02adbf]">
              <svg viewBox="0 0 28 28" className="size-7" fill="none" stroke="currentColor" strokeWidth="2.800">
                <circle cx="14" cy="14" r="10" />
                <path d="M14 0.500V9M14 19V27.500M0.500 14H9M19 14H27.500" />
              </svg>
            </span>
            <span className="ml-5 flex-1">来源表</span>
            <button aria-label="来源表菜单"><Dots /></button>
          </div>
          <div className="ml-[29px] h-[60px] w-0.5 bg-[#02adbf]" />
          <button aria-label="添加节点" className="flex size-[60px] items-center justify-center rounded-full bg-[#02adbf]">
            <svg viewBox="0 0 18 18" className="size-[18px]" stroke="#fff" strokeWidth="2"><path d="M9 0V18M0 9H18" /></svg>
          </button>
          <div className="ml-[29px] h-[60px] w-0.5 bg-[#02adbf]" />
          <div className="rounded-sm border-2 border-[#02adbf] bg-white p-1">
            <div className="flex h-12 items-center rounded-sm bg-[#02adbf] pr-[18px] pl-[10px] text-white">
              <svg viewBox="0 0 28 24" className="h-6 w-7" fill="none" stroke="currentColor" strokeWidth="3">
                <path d="M1.500 1.500H26.500V22.500H1.500ZM8.500 18V10M14 18V6M19.500 18V12.500" />
              </svg>
              <span className="ml-[22px] flex-1 whitespace-nowrap">*图表-分析表1</span>
              <button aria-label="图表菜单"><Dots /></button>
            </div>
          </div>
        </aside>
      </div>

      {/* Support */}
      <button aria-label="在线客服" className="fixed right-0 bottom-0 z-40 flex size-20 items-center justify-center rounded-full bg-[#02adbf] shadow-[0_2px_10px_rgba(20,25,60,0.3)]">
        <svg viewBox="0 0 40 40" className="size-10">
          <path d="M5 18A15 14 0 0 1 35 18" fill="none" stroke="#fff" strokeWidth="2.600" />
          <rect x="9" y="10" width="22" height="20" rx="7" fill="#fff" />
          <path d="M4 16H7V26H4A3 3 0 0 1 1 23V19A3 3 0 0 1 4 16ZM33 16H36A3 3 0 0 1 39 19V23A3 3 0 0 1 36 26H33Z" fill="#fff" />
          <path d="M35 26C35 32 30 35 21 35" fill="none" stroke="#fff" strokeWidth="2.600" />
          <path d="M14 21C17 25.500 23 25.500 26 21" fill="none" stroke="#02adbf" strokeWidth="2.600" strokeLinecap="round" />
        </svg>
      </button>
    </div>
  )
}
